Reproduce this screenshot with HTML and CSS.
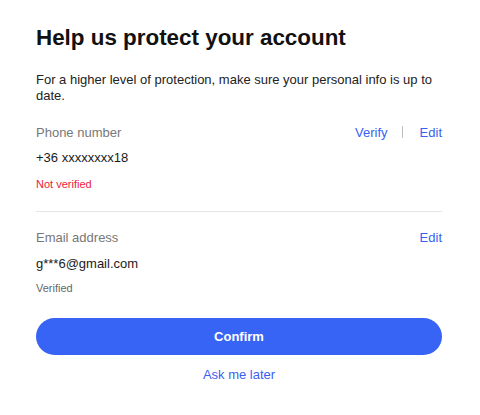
FILE: index.html
```html
<!DOCTYPE html>
<html>
<head>
<meta charset="utf-8">
<link rel="stylesheet" href="styles.css">
</head>
<body>
<div class="card">
  <h1 class="title">Help us protect your account</h1>
  <p class="desc">For a higher level of protection, make sure your personal info is up to date.</p>
  <div class="section first">
    <div class="row">
      <span class="label">Phone number</span>
      <span class="actions"><a class="link">Verify</a><span class="sep"></span><a class="link">Edit</a></span>
    </div>
    <div class="value">+36 xxxxxxxx18</div>
    <div class="status bad">Not verified</div>
  </div>
  <div class="divider"></div>
  <div class="section second">
    <div class="row">
      <span class="label">Email address</span>
      <span class="actions"><a class="link">Edit</a></span>
    </div>
    <div class="value">g***6@gmail.com</div>
    <div class="status">Verified</div>
  </div>
  <button class="confirm">Confirm</button>
  <div class="later"><a class="link">Ask me later</a></div>
</div>
</body>
</html>
```
FILE: styles.css
```css
html, body {
  margin: 0;
  padding: 0;
  background: #fff;
}
body {
  font-family: "Liberation Sans", Arial, sans-serif;
  color: #1a1a1a;
}
.card {
  width: 406px;
  padding: 24px 0 0 36px;
}
.title {
  margin: 0;
  font-size: 22.4px;
  font-weight: bold;
  line-height: 28px;
  color: #111;
}
.desc {
  margin: 20px 0 0;
  font-size: 13px;
  line-height: 16px;
  color: #222;
}
.section.first {
  padding-top: 20px;
}
.section.second {
  padding-top: 17px;
}
.row {
  display: flex;
  justify-content: space-between;
  align-items: center;
  height: 16px;
}
.label {
  font-size: 13px;
  color: #777;
}
.actions {
  display: flex;
  align-items: center;
}
.link {
  font-size: 13px;
  color: #3b5ff0;
  text-decoration: none;
}
.sep {
  width: 1px;
  height: 12px;
  background: #bbb;
  margin: 0 17px 0 14px;
}
.value {
  margin-top: 10px;
  font-size: 13px;
  line-height: 16px;
  color: #1a1a1a;
}
.second .value {
  margin-top: 11px;
}
.status {
  margin-top: 11px;
  font-size: 11px;
  line-height: 14px;
  color: #666;
}
.second .status {
  margin-top: 9px;
}
.status.bad {
  color: #ec1a3c;
}
.divider {
  height: 1px;
  background: #e6e6e6;
  margin-top: 20px;
}
.confirm {
  display: block;
  width: 406px;
  height: 37px;
  margin-top: 23px;
  border: none;
  border-radius: 19px;
  background: #3864f5;
  color: #fff;
  font-family: "Liberation Sans", Arial, sans-serif;
  font-size: 13px;
  font-weight: bold;
  padding: 0;
}
.later {
  text-align: center;
  margin-top: 11px;
  line-height: 16px;
}
```
